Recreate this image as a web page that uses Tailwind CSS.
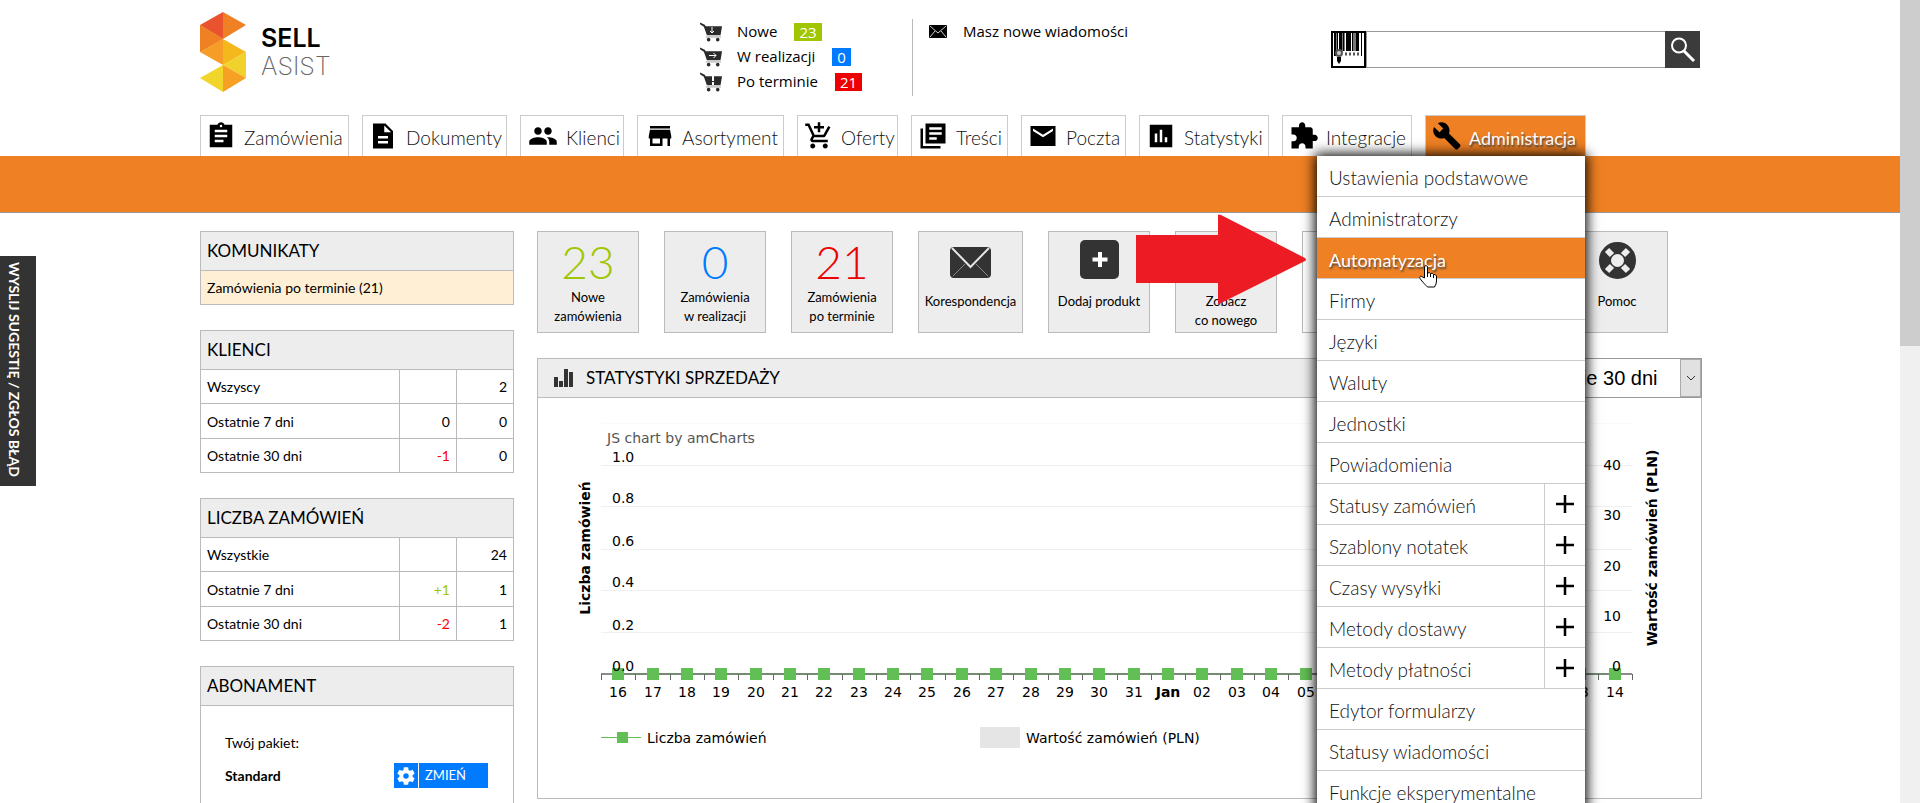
<!DOCTYPE html>
<html lang="pl">
<head>
<meta charset="utf-8">
<title>Sellasist – panel</title>
<script src="https://cdn.jsdelivr.net/npm/@tailwindcss/browser@4"></script>
</head>
<body class="flex h-screen overflow-hidden bg-white font-['Lato',sans-serif] text-black">

<svg class="hidden" aria-hidden="true">
  <symbol id="cart" viewBox="0 0 24 20"><path fill="#2b2b2b" d="M0 0l5 2.4L6 4h17l-1.6 9.5H7.2L4 4.6 0 1.8z"/><rect x="6" y="14.5" width="16" height="1.3" fill="#b5b5b5"/><circle cx="9" cy="18" r="1.9" fill="#2b2b2b"/><circle cx="18.500" cy="18" r="1.900" fill="#2b2b2b"/></symbol>
</svg>

<div class="relative flex min-w-0 flex-1 flex-col overflow-hidden">
  <header>
    <div class="mx-auto flex h-[115px] w-full max-w-[1504px] items-start pl-[2px]">
      <a href="#" aria-label="Sell Asist" class="flex w-[500px] shrink-0 gap-[15px] pt-3 font-['Inter',sans-serif]">
        <svg class="h-20 w-[46px] shrink-0" viewBox="0 0 46 80">
          <path fill="#e9532d" d="M0 13L23 0v27z"/><path fill="#ef8023" d="M23 0l23 13-23 14zM0 13l23 14L0 40z"/>
          <path fill="#ef8023" d="M0 13l23 14L0 40z"/><path fill="#f59d27" d="M23 27v26L0 40z"/><path fill="#f5b81c" d="M23 27l23 13-23 13z"/>
          <path fill="#f1d12b" d="M46 40v26L23 53z"/><path fill="#f2d52b" d="M23 53v27L0 66z"/><path fill="#f6a024" d="M23 53l23 13-23 14z"/>
        </svg>
        <span class="flex flex-col pt-3 text-[25px] leading-7"><b class="font-semibold">SELL</b><span class="font-extralight text-[#666]">ASIST</span></span>
      </a>
      <ul class="mt-[19px] flex h-[77px] w-[213px] shrink-0 flex-col border-r border-[#bbb] font-['Open_Sans',sans-serif] text-[15px] leading-[25px]">
        <li class="flex items-center"><svg class="mr-[14px] h-5 w-[23px]"><use href="#cart"/><path d="M12 5v6m-2-2l2 2 2-2" stroke="#fff" fill="none"/></svg><a href="#">Nowe</a><span class="ml-[17px] bg-[#9fc600] px-[5px] leading-[18px] text-white">23</span></li>
        <li class="flex items-center"><svg class="mr-[14px] h-5 w-[23px]"><use href="#cart"/><path d="M9 8.500h7m-2.500-2.500l2.500 2.500-2.500 2.500" stroke="#fff" fill="none"/></svg><a href="#">W realizacji</a><span class="ml-[17px] bg-[#007bff] px-[5px] leading-[18px] text-white">0</span></li>
        <li class="flex items-center"><svg class="mr-[14px] h-5 w-[23px]"><use href="#cart"/><path d="M13 4v5m0 1v3" stroke="#fff" stroke-width="2" fill="none"/></svg><a href="#">Po terminie</a><span class="ml-[17px] bg-[#e00] px-[5px] leading-[18px] text-white">21</span></li>
      </ul>
      <a href="#" class="mt-[19px] ml-4 flex items-center gap-4 font-['Open_Sans',sans-serif] text-[15px] leading-[25px]">
        <svg class="h-[13px] w-[18px]" viewBox="0 0 18 13"><rect width="18" height="13" rx="1"/><path d="M1 1l8 7 8-7M1 12l5-6M17 12l-5-6" stroke="#ccc" fill="none"/></svg>Masz nowe wiadomości</a>
      <form class="mt-[31px] mr-[2px] ml-auto flex h-[37px] w-[369px]" onsubmit="return false">
        <button type="button" aria-label="Skanuj kod" class="w-[35px] shrink-0 border-2 border-black bg-white">
          <svg class="h-[33px] w-[31px]" viewBox="0 0 31 33"><path d="M1 0h2v23H1zM4 0h1v19H4zM6 0h3v17H6zM10 0h1v18h-1zM13 0h5v18h-5zM19 0h1v18h-1zM23 0h3v18h-3zM28 0h1v23h-1z"/><path fill="#777" d="M3 0h1v20H3zM9 0h1v18H9zM20 0h3v18h-3zM11 0h1v18h-1z"/><circle cx="6" cy="20" r="4" fill="#555"/><circle cx="6" cy="20" r="2" fill="#ccc"/><path d="M4 24h4v4l-2 3-2-3z"/><path d="M12 21h14" stroke="#555" stroke-width="3" stroke-dasharray="2 2"/></svg>
        </button>
        <input type="search" aria-label="Szukaj" class="min-w-0 flex-1 border-y border-l border-[#999] px-2">
        <button aria-label="Szukaj" class="flex w-[35px] shrink-0 items-center justify-center bg-[#3b3b3b]"><svg class="size-[26px]" viewBox="0 0 26 26" fill="none" stroke="#fff"><circle cx="9" cy="8.500" r="7" stroke-width="2"/><path d="M14 14l10 10" stroke-width="3"/></svg></button>
      </form>
    </div>
    <nav class="border-b border-[#999] bg-linear-to-b from-white from-[41px] to-[#ef8023] to-[41px] font-['Lato',sans-serif] text-[19px] font-light text-[#111]">
      <ul class="mx-auto flex h-[97px] w-full max-w-[1504px] gap-[13px] pl-[2px] *:h-[41px] *:shrink-0 *:border *:border-b-0 *:border-[#ccc]">
        <li class="w-[149px]"><a href="#" class="flex items-center gap-2 pt-1 pl-[5px]"><svg class="size-[30px] fill-black" viewBox="0 0 24 24"><path d="M21 3h-6.180C14.400 1.840 13.300 1 12 1s-2.400.84-2.820 2H3v18h18zm-9 0c.55 0 1 .45 1 1s-.45 1-1 1-1-.45-1-1 .45-1 1-1zm2 14H7v-2h7zm3-4H7v-2h10zm0-4H7V7h10z"/></svg><span class="pt-1">Zamówienia</span></a></li>
        <li class="w-[145px]"><a href="#" class="flex items-center gap-2 pt-1 pl-[5px]"><svg class="size-[30px] fill-black" viewBox="0 0 24 24"><path d="M14 2H4v20h16V8zm2 16H8v-2h8zm0-4H8v-2h8zm-3-5V3.500L18.500 9z"/></svg><span class="pt-1">Dokumenty</span></a></li>
        <li class="w-[104px]"><a href="#" class="flex items-center gap-2 pt-1 pl-[7px]"><svg class="size-[30px] fill-black" viewBox="0 0 24 24"><path d="M16 11c1.660 0 2.990-1.340 2.990-3S17.660 5 16 5s-3 1.340-3 3 1.340 3 3 3zm-8 0c1.660 0 2.990-1.340 2.990-3S9.660 5 8 5 5 6.340 5 8s1.340 3 3 3zm0 2c-2.330 0-7 1.170-7 3.500V19h14v-2.500c0-2.330-4.670-3.500-7-3.500zm8 0c-.29 0-.62.02-.97.05 1.160.84 1.970 1.970 1.970 3.450V19h6v-2.500c0-2.330-4.670-3.500-7-3.500z"/></svg><span class="pt-1">Klienci</span></a></li>
        <li class="w-[147px]"><a href="#" class="flex items-center gap-[7px] pt-1 pl-[7px]"><svg class="size-[30px] fill-black" viewBox="0 0 24 24"><path d="M20 4H4v2h16zm1 10v-2l-1-5H4l-1 5v2h1v6h10v-6h4v6h2v-6zm-9 4H6v-4h6z"/></svg><span class="pt-1">Asortyment</span></a></li>
        <li class="w-[101px]"><a href="#" class="flex items-center gap-[7px] pt-1 pl-[6px]"><svg class="size-[30px] fill-black" viewBox="0 0 24 24"><path d="M11 9h2V6h3V4h-3V1h-2v3H8v2h3zm-4 9c-1.100 0-1.990.9-1.990 2S5.900 22 7 22s2-.9 2-2-.9-2-2-2zm10 0c-1.100 0-1.990.9-1.990 2s.89 2 1.990 2 2-.9 2-2-.9-2-2-2zm-9.830-3.250l.03-.12.9-1.630h7.450c.75 0 1.410-.41 1.750-1.030l3.860-7.010L19.420 4h-.01l-1.100 2-2.760 5H8.530l-.13-.27L6.160 6l-.95-2-.94-2H1v2h2l3.600 7.590-1.350 2.450c-.16.28-.25.61-.25.96 0 1.100.9 2 2 2h12v-2H7.420c-.13 0-.25-.11-.25-.25z"/></svg><span class="pt-1">Oferty</span></a></li>
        <li class="w-[97px]"><a href="#" class="flex items-center gap-2 pt-1 pl-[6px]"><svg class="size-[30px] fill-black" viewBox="0 0 24 24"><path d="M4 6H2v16h16v-2H4zm18-4H6v16h16zm-3 9H9V9h10zm-4 4H9v-2h6zm4-8H9V5h10z"/></svg><span class="pt-1">Treści</span></a></li>
        <li class="w-[105px]"><a href="#" class="flex items-center gap-2 pt-1 pl-[6px]"><svg class="size-[30px] fill-black" viewBox="0 0 24 24"><path d="M22 4H2v16h20zm-2 4l-8 5-8-5V6l8 5 8-5z"/></svg><span class="pt-1">Poczta</span></a></li>
        <li class="w-[130px]"><a href="#" class="flex items-center gap-2 pt-1 pl-[6px]"><svg class="size-[30px] fill-black" viewBox="0 0 24 24"><path d="M21 3H3v18h18zM9 17H7v-7h2zm4 0h-2V7h2zm4 0h-2v-4h2z"/></svg><span class="pt-1">Statystyki</span></a></li>
        <li class="w-[130px]"><a href="#" class="flex items-center gap-[7px] pt-1 pl-[6px]"><svg class="size-[30px] fill-black" viewBox="0 0 24 24"><path d="M20.500 11H19V7c0-1.100-.9-2-2-2h-4V3.500C13 2.120 11.880 1 10.500 1S8 2.120 8 3.500V5H2v5.800h1.500c1.490 0 2.700 1.210 2.700 2.700s-1.210 2.700-2.700 2.700H2V22h5.800v-1.500c0-1.490 1.210-2.700 2.700-2.700s2.700 1.210 2.700 2.700V22H19v-6h1.500c1.380 0 2.500-1.120 2.500-2.500S21.880 11 20.500 11z"/></svg><span class="pt-1">Integracje</span></a></li>
        <li class="relative w-[161px] bg-[#ef8023]"><a href="#" class="flex items-center gap-[7px] pt-1 pl-[6px] font-normal text-white [text-shadow:1px_2px_2px_#444]"><svg class="size-[30px] fill-black" viewBox="0 0 24 24"><path d="M22.700 19l-9.100-9.100c.9-2.300.4-5-1.500-6.900-2-2-5-2.400-7.400-1.300L9 6 6 9 1.600 4.700C.4 7.100.9 10.100 2.900 12.100c1.900 1.900 4.600 2.400 6.900 1.500l9.100 9.100 1.400 0 2.300-2.300z"/></svg><span class="pt-1 text-[18px] leading-7">Administracja</span></a>
          <ul class="absolute top-10 right-0 z-10 w-[268px] bg-white shadow-[0_0_12px_2px_#000] *:flex *:h-[41px] *:items-center *:border-b *:border-[#ccc] *:pt-1 *:pl-3">
            <li><a href="#">Ustawienia podstawowe</a></li>
            <li><a href="#">Administratorzy</a></li>
            <li class="relative bg-[#ef8023] text-white [text-shadow:1px_2px_2px_#444]"><a href="#" class="text-[18px] font-normal">Automatyzacja</a>
              <svg class="absolute -top-6 right-full mr-[11px] h-[90px] w-[170px]" viewBox="0 0 170 90"><path fill="#ed1c24" d="M0 21h82V1q0-1 3 0l84 43q2 2 0 3L85 89q-3 2-3 0V69H0z"/></svg>
              <svg class="absolute top-[26px] left-[101px] h-6 w-[19px]" viewBox="0 0 19 24"><path fill="#fff" stroke="#000" d="M6.500 14V2.500q1.500-2 3 0V9q2-1 3 .5 2-1 3 1 2-.5 3 1.500v5q0 3-2 6h-7c-2-2-5-5-7.500-8.500-1-2 1-3 2.500-1.500z"/><path stroke="#000" d="M9.500 9v4m3-3v3m3-2v3"/></svg>
            </li>
            <li><a href="#">Firmy</a></li>
            <li><a href="#">Języki</a></li>
            <li><a href="#">Waluty</a></li>
            <li><a href="#">Jednostki</a></li>
            <li><a href="#">Powiadomienia</a></li>
            <li class="relative"><a href="#">Statusy zamówień</a><button aria-label="Rozwiń Statusy zamówień" class="absolute inset-y-0 right-0 flex w-[41px] items-center justify-center border-l border-[#ccc]"><svg class="size-[18px] stroke-black stroke-[2.5]" viewBox="0 0 18 18"><path d="M9 0v18M0 9h18"/></svg></button></li>
            <li class="relative"><a href="#">Szablony notatek</a><button aria-label="Rozwiń Szablony notatek" class="absolute inset-y-0 right-0 flex w-[41px] items-center justify-center border-l border-[#ccc]"><svg class="size-[18px] stroke-black stroke-[2.5]" viewBox="0 0 18 18"><path d="M9 0v18M0 9h18"/></svg></button></li>
            <li class="relative"><a href="#">Czasy wysyłki</a><button aria-label="Rozwiń Czasy wysyłki" class="absolute inset-y-0 right-0 flex w-[41px] items-center justify-center border-l border-[#ccc]"><svg class="size-[18px] stroke-black stroke-[2.5]" viewBox="0 0 18 18"><path d="M9 0v18M0 9h18"/></svg></button></li>
            <li class="relative"><a href="#">Metody dostawy</a><button aria-label="Rozwiń Metody dostawy" class="absolute inset-y-0 right-0 flex w-[41px] items-center justify-center border-l border-[#ccc]"><svg class="size-[18px] stroke-black stroke-[2.5]" viewBox="0 0 18 18"><path d="M9 0v18M0 9h18"/></svg></button></li>
            <li class="relative"><a href="#">Metody płatności</a><button aria-label="Rozwiń Metody płatności" class="absolute inset-y-0 right-0 flex w-[41px] items-center justify-center border-l border-[#ccc]"><svg class="size-[18px] stroke-black stroke-[2.5]" viewBox="0 0 18 18"><path d="M9 0v18M0 9h18"/></svg></button></li>
            <li><a href="#">Edytor formularzy</a></li>
            <li><a href="#">Statusy wiadomości</a></li>
            <li><a href="#">Funkcje eksperymentalne</a></li>
          </ul>
        </li>
      </ul>
    </nav>
  </header>

  <div class="mx-auto flex w-full max-w-[1504px] items-start gap-[23px] pt-[18px] pl-[2px]">
    <aside class="flex w-[314px] shrink-0 flex-col gap-[25px] text-[14px]">
      <section class="border border-[#bbb]">
        <h2 class="flex h-[39px] items-center border-b border-[#bbb] bg-[#ededed] px-[6px] text-[17px]">KOMUNIKATY</h2>
        <a href="#" class="flex h-[33px] items-center bg-[#fff0d5] px-[6px]">Zamówienia po terminie (21)</a>
      </section>
      <table class="w-full table-fixed border-collapse text-right [&_td]:border [&_td]:border-[#bbb] [&_td]:px-[6px] [&_th]:border [&_th]:border-[#bbb] [&_th]:px-[6px] [&_th]:text-left [&_th]:font-normal">
        <colgroup><col><col class="w-[57px]"><col class="w-[57px]"></colgroup>
        <thead><tr class="h-[39px] bg-[#ededed] text-[17px]"><th colspan="3">KLIENCI</th></tr></thead>
        <tbody>
          <tr class="h-[34px]"><th scope="row">Wszyscy</th><td></td><td>2</td></tr>
          <tr class="h-[35px]"><th scope="row">Ostatnie 7 dni</th><td>0</td><td>0</td></tr>
          <tr class="h-[34px]"><th scope="row">Ostatnie 30 dni</th><td class="text-[#f00]">-1</td><td>0</td></tr>
        </tbody>
      </table>
      <table class="w-full table-fixed border-collapse text-right [&_td]:border [&_td]:border-[#bbb] [&_td]:px-[6px] [&_th]:border [&_th]:border-[#bbb] [&_th]:px-[6px] [&_th]:text-left [&_th]:font-normal">
        <colgroup><col><col class="w-[57px]"><col class="w-[57px]"></colgroup>
        <thead><tr class="h-[39px] bg-[#ededed] text-[17px]"><th colspan="3">LICZBA ZAMÓWIEŃ</th></tr></thead>
        <tbody>
          <tr class="h-[34px]"><th scope="row">Wszystkie</th><td></td><td>24</td></tr>
          <tr class="h-[35px]"><th scope="row">Ostatnie 7 dni</th><td class="text-[#9fc600]">+1</td><td>1</td></tr>
          <tr class="h-[34px]"><th scope="row">Ostatnie 30 dni</th><td class="text-[#f00]">-2</td><td>1</td></tr>
        </tbody>
      </table>
      <section class="h-[300px] border border-[#bbb]">
        <h2 class="flex h-[39px] items-center border-b border-[#bbb] bg-[#ededed] px-[6px] text-[17px]">ABONAMENT</h2>
        <div class="flex flex-col gap-2 pt-[25px] pr-[25px] pl-6">
          <p class="leading-6">Twój pakiet:</p>
          <div class="flex h-[25px] items-center justify-between"><b>Standard</b>
            <button class="flex h-[25px] gap-px text-white"><span class="flex h-full w-6 items-center justify-center bg-[#007bff]"><svg class="size-[22px] fill-white" viewBox="0 0 24 24"><path d="M19.140 12.940c.04-.3.06-.61.06-.94 0-.32-.02-.64-.07-.94l2.030-1.580c.18-.14.23-.41.12-.61l-1.920-3.320c-.12-.22-.37-.29-.59-.22l-2.390.96c-.5-.38-1.030-.7-1.620-.94l-.36-2.540c-.04-.24-.24-.41-.48-.41h-3.840c-.24 0-.43.17-.47.41l-.36 2.540c-.59.24-1.130.57-1.620.94l-2.390-.96c-.22-.08-.47 0-.59.22L2.740 8.870c-.12.21-.08.47.12.61l2.030 1.580c-.05.3-.09.63-.09.94s.02.64.07.94l-2.030 1.580c-.18.14-.23.41-.12.61l1.920 3.320c.12.22.37.29.59.22l2.390-.96c.5.38 1.030.7 1.620.94l.36 2.540c.05.24.24.41.48.41h3.840c.24 0 .44-.17.47-.41l.36-2.540c.59-.24 1.130-.56 1.620-.94l2.390.96c.22.08.47 0 .59-.22l1.920-3.320c.12-.22.07-.47-.12-.61zM12 15a3 3 0 110-6 3 3 0 010 6z"/></svg></span><span class="flex h-full w-[69px] items-center bg-[#007bff] pl-[6px] text-[13px]">ZMIEŃ</span></button>
          </div>
        </div>
      </section>
    </aside>

    <main class="flex min-w-0 flex-1 flex-col gap-[25px]">
      <div class="flex gap-[25px] text-center text-[13px] leading-[19px] *:flex *:h-[102px] *:w-[102px] *:shrink-0 *:flex-col *:items-center *:border *:border-[#bbb] *:bg-[#ededed]">
        <a href="#"><span class="h-[56px] shrink-0 pt-[7px] text-[46px] leading-[46px] font-light text-[#9fc600]">23</span>Nowe<br>zamówienia</a>
        <a href="#"><span class="h-[56px] shrink-0 pt-[7px] text-[46px] leading-[46px] font-light text-[#007bff]">0</span>Zamówienia<br>w realizacji</a>
        <a href="#"><span class="h-[56px] shrink-0 pt-[7px] text-[46px] leading-[46px] font-light text-[#e00]">21</span>Zamówienia<br>po terminie</a>
        <a href="#" class="min-w-[105px]"><svg class="mt-[15px] mb-[14px] h-[31px] w-[41px] shrink-0" viewBox="0 0 41 31"><rect width="41" height="31" rx="4" fill="#333"/><path d="M2 1l18.500 19L39 1" fill="none" stroke="#e5e5e5" stroke-width="2"/><path d="M3 29l12-12M38 29L26 17" stroke="#888"/></svg>Korespondencja</a>
        <a href="#"><svg class="mt-[8px] mb-[13px] size-[39px] shrink-0" viewBox="0 0 39 39"><rect width="39" height="39" rx="5" fill="#333"/><path d="M20 12v15M12.500 19.500h15" stroke="#fff" stroke-width="4"/></svg>Dodaj produkt</a>
        <a href="#"><span class="h-[60px] shrink-0"></span>Zobacz<br>co nowego</a>
        <a href="#" class="bg-white!" aria-label="Skrót"></a>
        <a href="#" class="min-w-[112px]" aria-label="Skrót"></a>
        <a href="#"><svg class="mt-[10px] mb-[13px] size-[37px] shrink-0" viewBox="0 0 37 37"><circle cx="18.500" cy="18.500" r="12.500" fill="none" stroke="#333" stroke-width="12"/><path d="M8 8l5 5M29 8l-5 5M8 29l5-5M29 29l-5-5" stroke="#ededed" stroke-width="6"/></svg>Pomoc</a>
      </div>
      <section class="border border-[#bbb]">
        <div class="flex h-[39px] items-center border-b border-[#bbb] bg-[#ededed] pl-4">
          <svg class="h-[18px] w-5 fill-[#333]" viewBox="0 0 20 18"><path d="M0 8h4v10H0zM5 12h4v6H5zM10 0h4v18h-4zM15 3h4v15h-4z"/></svg>
          <h2 class="ml-3 text-[17px]">STATYSTYKI SPRZEDAŻY</h2>
          <div class="relative -my-px -mr-px ml-auto h-[40px] w-[191px]">
            <select aria-label="Okres" class="h-full w-full appearance-none border border-[#999] bg-white pl-[11px] font-['Liberation_Sans',sans-serif] text-[20px]"><option>Ostatnie 30 dni</option></select>
            <span class="pointer-events-none absolute inset-y-px right-px flex w-[21px] items-center justify-center border border-[#aaa] bg-[#e1e1e1]"><svg class="h-[6px] w-[10px]" viewBox="0 0 10 6"><path d="M1 1l4 4 4-4" fill="none" stroke="#333"/></svg></span>
          </div>
        </div>
        <svg id="chart" class="block w-full font-['DejaVu_Sans',sans-serif] text-[14px]" viewBox="0 0 1163 400" role="img" aria-label="Statystyki sprzedaży"></svg>
      </section>
    </main>
  </div>

  <button class="absolute top-[256px] left-0 h-[230px] w-9 bg-[#333] pt-[6px] pr-[7px] text-left text-[14px] leading-[29px] font-bold whitespace-nowrap text-white [writing-mode:vertical-rl]">WYSLIJ SUGESTIĘ / ZGŁOS BŁĄD</button>
</div>

<div class="w-5 shrink-0 bg-[#f0f0f0]"><div class="h-[346px] bg-[#cdcdcd]"></div></div>

<script>
const days = [];
for (let d = 16; d <= 31; d++) days.push(String(d));
days.push('Jan');
for (let d = 2; d <= 14; d++) days.push(String(d).padStart(2, '0'));
const left = 63, right = 1094, base = 276, step = (right - left) / days.length;
const gridY = [67, 108, 151, 192, 234];
let s = `<path d="M${left} 25.500H${right}" stroke="#fafafa"/>`;
s += gridY.map(y => `<path d="M${left} ${y}.5H${right}" stroke="#f0f0f0"/>`).join('');
s += `<path d="M${left} ${base}H${right}" stroke="#666" stroke-width="1.500"/>`;
for (let i = 0; i <= days.length; i++) s += `<path d="M${Math.round(left + i * step) + 0.5} ${base}v6" stroke="#666"/>`;
s += `<path d="M${left + step / 2} ${base}H${right - step / 2}" stroke="#5d8a58"/>`;
days.forEach((d, i) => {
  const x = Math.round(left + (i + 0.5) * step);
  s += `<rect x="${x - 6}" y="${base - 6}" width="12" height="12" fill="#62bf55"/>`;
  s += `<text x="${x}" y="299" text-anchor="middle"${d === 'Jan' ? ' font-weight="bold"' : ''}>${d}</text>`;
});
[['1.0', 64], ['0.8', 105], ['0.6', 148], ['0.4', 189], ['0.2', 232], ['0.0', 273]].forEach(([t, y]) => s += `<text x="74" y="${y}">${t}</text>`);
[['40', 72], ['30', 122], ['20', 173], ['10', 223], ['0', 273]].forEach(([t, y]) => s += `<text x="1083" y="${y}" text-anchor="end">${t}</text>`);
s += `<text x="69" y="45" fill="#555">JS chart by amCharts</text>`;
s += `<text transform="translate(52 150) rotate(-90)" text-anchor="middle" font-weight="bold">Liczba zamówień</text>`;
s += `<text transform="translate(1119 150) rotate(-90)" text-anchor="middle" font-weight="bold">Wartość zamówień (PLN)</text>`;
s += `<path d="M63 339.500h40" stroke="#62bf55"/><rect x="79" y="334" width="11" height="11" fill="#62bf55"/><text x="109" y="345">Liczba zamówień</text>`;
s += `<rect x="442" y="329" width="40" height="21" fill="#e5e5e5"/><text x="488" y="345">Wartość zamówień (PLN)</text>`;
document.getElementById('chart').innerHTML = s;
</script>
</body>
</html>
